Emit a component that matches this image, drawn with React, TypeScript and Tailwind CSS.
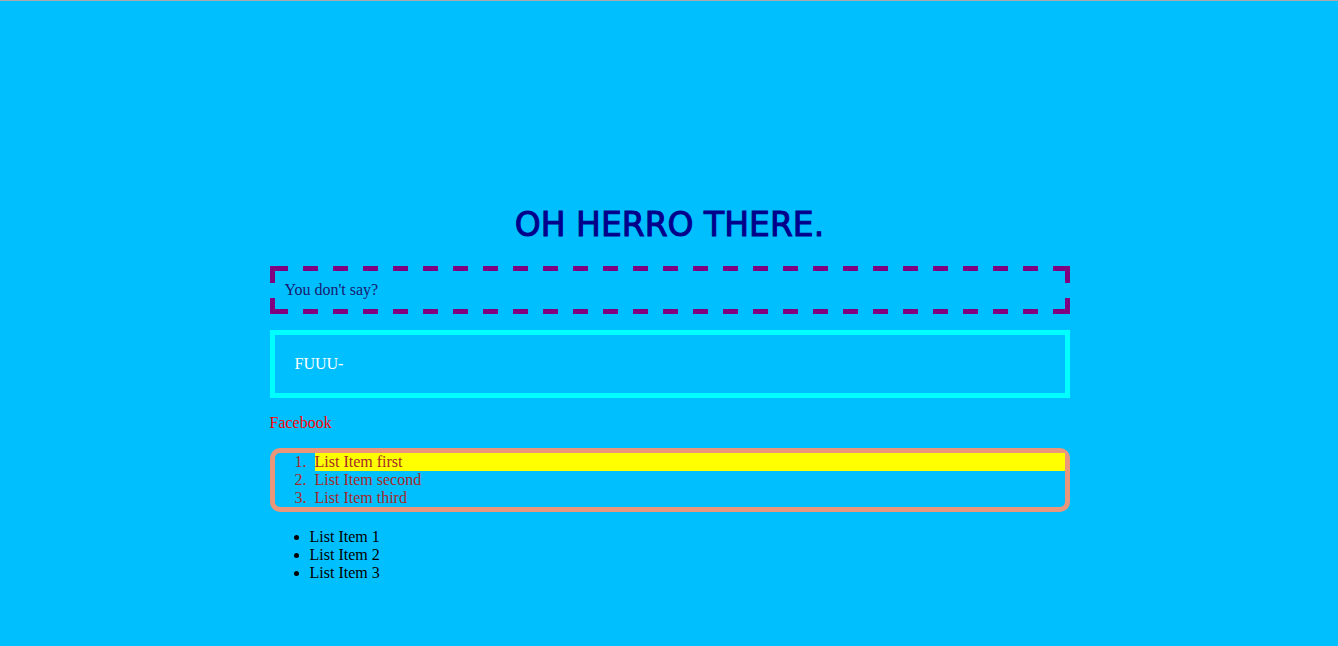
import React from "react";

const numbered = ["List Item first", "List Item second", "List Item third"];
const bulleted = ["List Item 1", "List Item 2", "List Item 3"];

/* One horizontal run of dashes with solid corners at either end. */
function DashRow() {
  return (
    <div aria-hidden="true" className="flex h-[5px]">
      <div className="w-[18px] bg-[#800080]" />
      <div className="flex-1 bg-[repeating-linear-gradient(90deg,transparent_0_15px,#800080_15px_30px)]" />
      <div className="w-[2px] bg-[#800080]" />
    </div>
  );
}

function DashSide() {
  return (
    <div aria-hidden="true" className="flex w-[5px] flex-col justify-between">
      <div className="h-3 bg-[#800080]" />
      <div className="h-[11px] bg-[#800080]" />
    </div>
  );
}

export default function App() {
  return (
    <div className="min-h-screen border-t border-[#a9a9a9] bg-[#00bfff] pl-px font-['Liberation_Serif','Times_New_Roman',serif] text-base leading-[18px] text-black">
      <main className="mx-auto flex max-w-[800px] flex-col gap-4 pt-[200px] pb-16">
        <h1 className="mb-px text-center font-['Comic_Sans_MS','DejaVu_Sans',sans-serif] text-[33px] leading-[48px] font-normal text-[#00008b] [-webkit-text-stroke:1px_#00008b]">
          OH HERRO THERE.
        </h1>
        <div>
          <DashRow />
          <div className="flex">
            <DashSide />
            <p className="flex-1 p-[10px] text-[#191970]">You don't say?</p>
            <DashSide />
          </div>
          <DashRow />
        </div>
        <p className="border-5 border-[#00ffff] p-5 text-white">FUUU-</p>
        <p>
          <a href="https://www.facebook.com" className="text-[#ff0000]">
            Facebook
          </a>
        </p>
        <ol className="list-decimal rounded-[10px] border-5 border-[#e9967a] pl-10 text-[#a52a2a]">
          {numbered.map((item) => (
            <li
              key={item}
              className="marker:content-[counter(list-item)_'.\a0\a0'] first:bg-[#ffff00]"
            >
              {item}
            </li>
          ))}
        </ol>
        <ul className="list-disc pl-10">
          {bulleted.map((item) => (
            <li key={item}>{item}</li>
          ))}
        </ul>
      </main>
    </div>
  );
}
